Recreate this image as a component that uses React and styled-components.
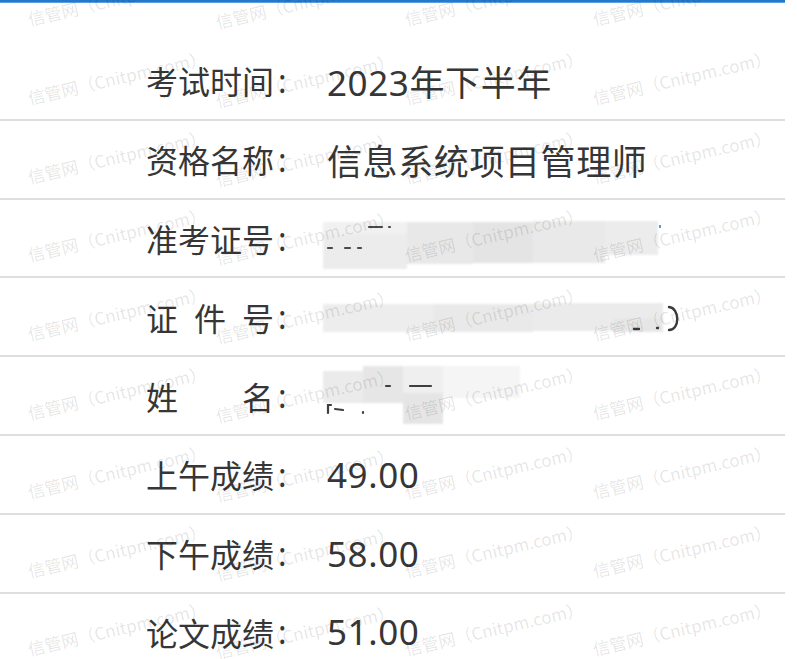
import React from 'react';
import styled, { createGlobalStyle } from 'styled-components';

const Global = createGlobalStyle`
  html, body { margin: 0; padding: 0; background: #fff; }
  body { font-family: "Noto Sans", "Noto Sans CJK SC", sans-serif; }
`;

const Page = styled.div`
  position: relative;
  width: 797px;
  height: 659px;
  overflow: hidden;
  background: #fff;
`;

const Sheet = styled.div`
  width: 785px;
  border-top: 2px solid #2479cf;
  box-shadow: inset 0 1px 0 #5c9fe0;
  padding-top: 40px;
`;

const Row = styled.div`
  display: grid;
  grid-template-columns: 128px 53px 1fr;
  align-items: center;
  height: 76.8px;
  padding-left: 146px;
  border-bottom: 2px solid #dedede;
  color: #363636;
`;

const Label = styled.div`
  display: flex;
  justify-content: space-between;
  font-family: "Noto Sans CJK SC", sans-serif;
  font-size: 32px;
  white-space: nowrap;
`;

const Colon = styled.span`
  font-family: "Noto Sans", sans-serif;
  font-size: 32px;
  margin-left: 4px;
`;

const Value = styled.div`
  font-family: "Noto Sans", "Noto Sans CJK SC", sans-serif;
  font-size: 35px;
  letter-spacing: 0.6px;
  white-space: nowrap;
`;

const Redaction = styled.svg`
  display: block;
  align-self: start;
  margin-left: -4px;
  overflow: visible;
`;

const Watermarks = styled.div`
  position: absolute;
  inset: 0;
  pointer-events: none;
  display: grid;
  grid-template-columns: repeat(4, 188.3px);
  grid-auto-rows: 78.8px;
  padding: 10px 0 0 30px;
`;

const Mark = styled.span`
  font-family: "Noto Sans CJK SC", sans-serif;
  font-size: 17px;
  line-height: 17px;
  height: 17px;
  color: rgba(0, 0, 0, 0.11);
  white-space: nowrap;
  justify-self: start;
  align-self: start;
  transform: rotate(-13deg);
  transform-origin: left bottom;
  ${p => p.$shift && 'margin-top: 3px;'}
`;

const Blur = () => (
  <defs>
    <filter id="soft" x="-5%" y="-20%" width="110%" height="140%">
      <feGaussianBlur stdDeviation="0.9" />
    </filter>
  </defs>
);

const TicketRedaction = () => (
  <Redaction width="345" height="77" viewBox="0 0 345 77">
    <Blur />
    <g filter="url(#soft)">
      <rect x="0" y="22" width="84" height="47" fill="#ececec" />
      <rect x="0" y="22" width="84" height="12" fill="#f1f1f1" />
      <rect x="84" y="22" width="66" height="42" fill="#e8e8e8" />
      <rect x="150" y="22" width="60" height="41" fill="#e4e4e4" />
      <rect x="210" y="21" width="72" height="42" fill="#e9e9e9" />
      <rect x="282" y="21" width="53" height="34" fill="#ececec" />
    </g>
    <g stroke="#4a4a4a" strokeWidth="2.2" strokeLinecap="round">
      <line x1="5" y1="48" x2="9" y2="48" />
      <line x1="22" y1="48" x2="27" y2="48" />
      <line x1="35" y1="48" x2="38" y2="48" />
      <line x1="46" y1="27" x2="59" y2="27" />
      <line x1="66" y1="27" x2="67" y2="27" />
    </g>
    <rect x="336" y="25" width="2" height="3" fill="#5a9be0" />
  </Redaction>
);

const IdRedaction = () => (
  <Redaction width="360" height="77" viewBox="0 0 360 77">
    <Blur />
    <g filter="url(#soft)">
      <rect x="0" y="26" width="110" height="28" fill="#ededed" />
      <rect x="110" y="26" width="100" height="28" fill="#e9e9e9" />
      <rect x="210" y="25" width="130" height="28" fill="#ebebeb" />
      <rect x="290" y="40" width="50" height="14" fill="#e6e6e6" />
    </g>
    <g stroke="#3a3a3a" strokeWidth="2.4" fill="none" strokeLinecap="round">
      <line x1="311" y1="51" x2="316" y2="51" />
      <line x1="334" y1="50" x2="335" y2="50" />
      <path d="M346 29 C357 30 357 52 346 52" />
    </g>
  </Redaction>
);

const NameRedaction = () => (
  <Redaction width="200" height="77" viewBox="0 0 200 77">
    <Blur />
    <g filter="url(#soft)">
      <rect x="0" y="14" width="40" height="32" fill="#ebebeb" />
      <rect x="40" y="9" width="40" height="37" fill="#e6e6e6" />
      <rect x="80" y="9" width="40" height="28" fill="#efefef" />
      <rect x="80" y="36" width="40" height="31" fill="#e5e5e5" />
      <rect x="120" y="9" width="77" height="32" fill="#f5f5f5" />
    </g>
    <g stroke="#3f3f3f" strokeWidth="2.2" strokeLinecap="round" fill="none">
      <line x1="63" y1="29" x2="67" y2="29" />
      <line x1="87" y1="29" x2="108" y2="29" />
      <path d="M5 56 V48 H8" />
      <line x1="12" y1="52" x2="20" y2="53" />
      <line x1="40" y1="55" x2="40" y2="56" />
    </g>
  </Redaction>
);

const rows = [
  { label: ['考', '试', '时', '间'], value: '2023年下半年' },
  { label: ['资', '格', '名', '称'], value: '信息系统项目管理师' },
  { label: ['准', '考', '证', '号'], redaction: <TicketRedaction /> },
  { label: ['证', '件', '号'], redaction: <IdRedaction /> },
  { label: ['姓', '名'], redaction: <NameRedaction /> },
  { label: ['上', '午', '成', '绩'], value: '49.00' },
  { label: ['下', '午', '成', '绩'], value: '58.00' },
  { label: ['论', '文', '成', '绩'], value: '51.00' },
];

const marks = Array.from({ length: 9 * 4 }, (_, i) => i);

export default function App() {
  return (
    <Page>
      <Global />
      <Sheet>
        {rows.map((r, i) => (
          <Row key={i}>
            <Label>
              {r.label.map((c, j) => (
                <span key={j}>{c}</span>
              ))}
            </Label>
            <Colon>:</Colon>
            {r.redaction ? r.redaction : <Value>{r.value}</Value>}
          </Row>
        ))}
      </Sheet>
      <Watermarks>
        {marks.map(i => (
          <Mark key={i} $shift={i % 4 === 1}>信管网（Cnitpm.com）</Mark>
        ))}
      </Watermarks>
    </Page>
  );
}
